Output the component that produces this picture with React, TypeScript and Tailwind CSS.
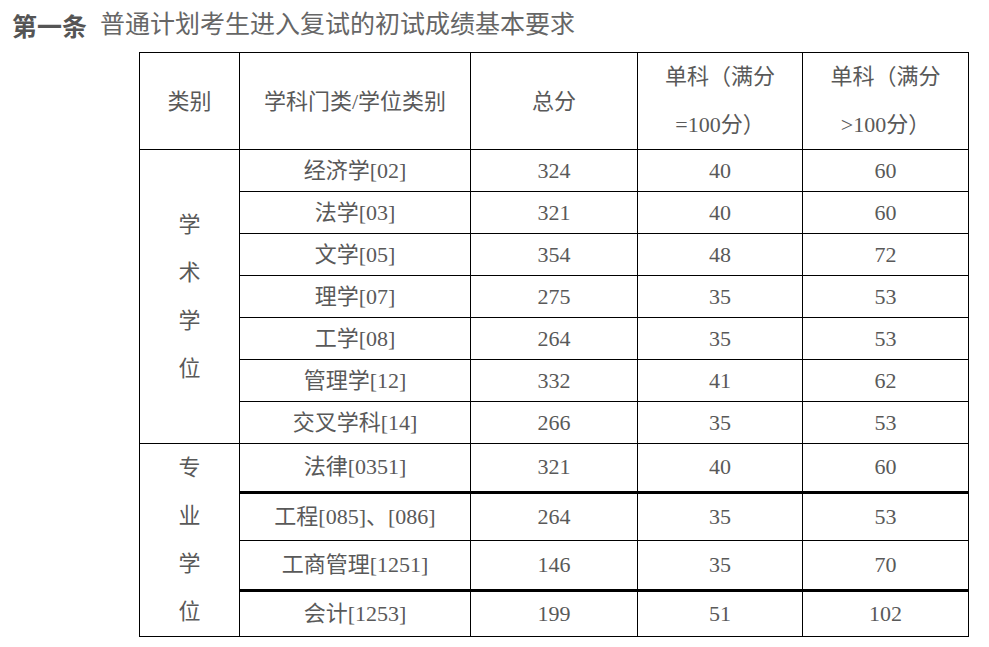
import React from "react";

const serif = { fontFamily: '"Liberation Serif", "Noto Sans CJK SC", serif' };

const academic: [string, string, string, string][] = [
  ["经济学[02]", "324", "40", "60"],
  ["法学[03]", "321", "40", "60"],
  ["文学[05]", "354", "48", "72"],
  ["理学[07]", "275", "35", "53"],
  ["工学[08]", "264", "35", "53"],
  ["管理学[12]", "332", "41", "62"],
  ["交叉学科[14]", "266", "35", "53"],
];

const prof: { v: [string, string, string, string]; h: string; thick: boolean }[] = [
  { v: ["法律[0351]", "321", "40", "60"], h: "h-[48px]", thick: true },
  { v: ["工程[085]、[086]", "264", "35", "53"], h: "h-[48px]", thick: false },
  { v: ["工商管理[1251]", "146", "35", "70"], h: "h-[49px]", thick: true },
  { v: ["会计[1253]", "199", "51", "102"], h: "h-[46px]", thick: false },
];

export default function App() {
  return (
    <div className="w-[989px] h-[647px] bg-white text-[#595959] overflow-hidden" style={serif}>
      <div className="h-[52px] pl-[12px] pt-[8px] flex items-start text-[25px] leading-[34px]">
        <span className="font-bold text-[#555]" style={{ fontFamily: '"Noto Sans CJK SC", sans-serif' }}>
          第一条
        </span>
        <span className="ml-[13px] text-[#666]">普通计划考生进入复试的初试成绩基本要求</span>
      </div>
      <table className="ml-[139px] border-collapse text-[22px] text-center table-fixed w-[829px]">
        <colgroup>
          <col className="w-[100px]" />
          <col className="w-[231px]" />
          <col className="w-[167px]" />
          <col className="w-[165px]" />
          <col className="w-[166px]" />
        </colgroup>
        <thead>
          <tr className="h-[97px]">
            <th className="border border-black font-normal p-0">类别</th>
            <th className="border border-black font-normal p-0">学科门类/学位类别</th>
            <th className="border border-black font-normal p-0">总分</th>
            <th className="border border-black font-normal p-0 leading-[48px]">
              单科（满分
              <br />
              =100分）
            </th>
            <th className="border border-black font-normal p-0 leading-[48px]">
              单科（满分
              <br />
              &gt;100分）
            </th>
          </tr>
        </thead>
        <tbody>
          {academic.map((r, i) => (
            <tr key={r[0]} className="h-[42px]">
              {i === 0 && (
                <td rowSpan={7} className="border border-black p-0 leading-[48px]">
                  {["学", "术", "学", "位"].map((c, k) => (
                    <div key={k}>{c}</div>
                  ))}
                </td>
              )}
              {r.map((c, j) => (
                <td key={j} className="border border-black p-0 leading-[28px]">
                  {c}
                </td>
              ))}
            </tr>
          ))}
          {prof.map((r, i) => (
            <tr key={r.v[0]} className={r.h}>
              {i === 0 && (
                <td rowSpan={4} className="border border-black p-0 leading-[48px]">
                  {["专", "业", "学", "位"].map((c, k) => (
                    <div key={k}>{c}</div>
                  ))}
                </td>
              )}
              {r.v.map((c, j) => (
                <td
                  key={j}
                  className={
                    r.thick
                      ? "border border-black border-b-[3px] p-0 leading-[28px]"
                      : "border border-black p-0 leading-[28px]"
                  }
                >
                  {c}
                </td>
              ))}
            </tr>
          ))}
        </tbody>
      </table>
    </div>
  );
}
